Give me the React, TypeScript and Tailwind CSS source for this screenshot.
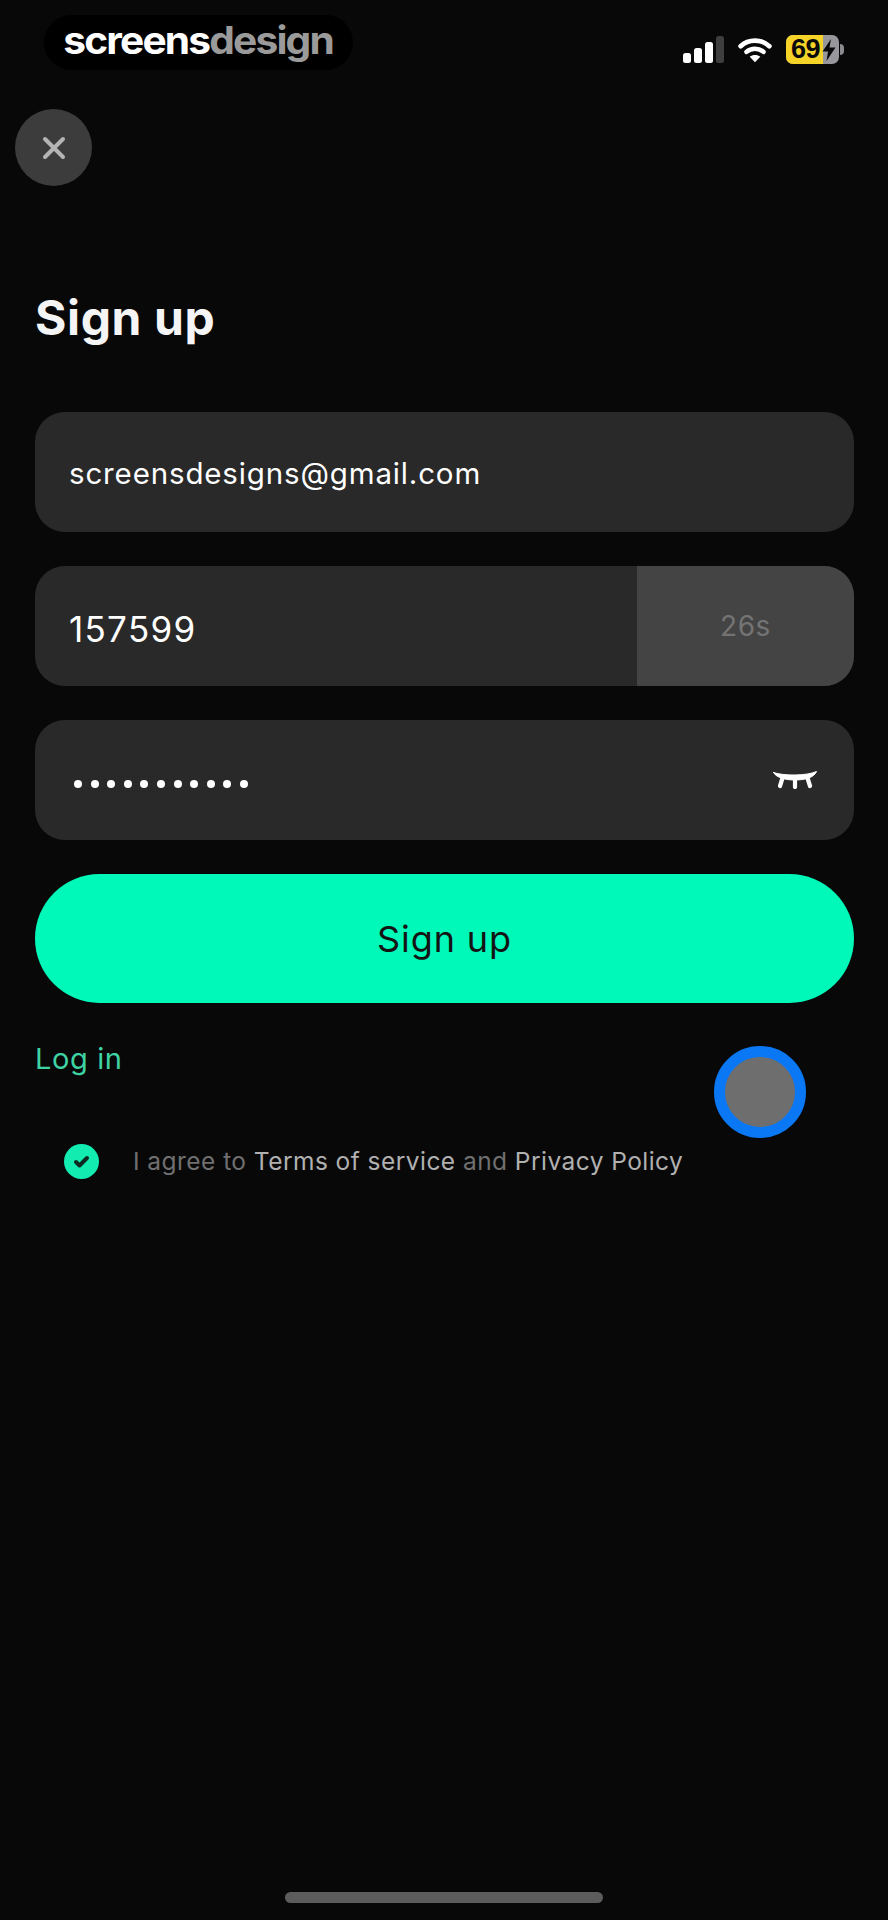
const SignalIcon = () => (
  <svg width="41" height="27" viewBox="0 0 41 27">
    <rect x="0" y="17" width="8" height="10" rx="2.5" fill="#fff" />
    <rect x="11" y="12" width="8" height="15" rx="2.5" fill="#fff" />
    <rect x="22" y="6" width="8" height="21" rx="2.5" fill="#fff" />
    <rect x="33" y="0" width="8" height="27" rx="2.5" fill="#3e3e3e" />
  </svg>
);

const WifiIcon = () => (
  <svg width="34" height="27" viewBox="0 0 36 28" fill="none">
    <path d="M2.8 10.5C11 2.5 25 2.5 33.2 10.5" stroke="#fff" strokeWidth="5" strokeLinecap="round" />
    <path d="M9 16.5C14 12 22 12 27 16.5" stroke="#fff" strokeWidth="4.8" strokeLinecap="round" />
    <path d="M18 27.5L12.4 21.8C15.5 19.2 20.5 19.2 23.6 21.8Z" fill="#fff" />
  </svg>
);

const Battery = () => (
  <div className="flex items-center">
    <div className="flex h-[29px] w-[53px] overflow-hidden rounded-[7px] bg-[#98989c]">
      <div className="flex h-full w-[37px] items-center justify-center bg-[#f5d327] pl-[2px]">
        <span className="text-[27px] leading-none font-bold text-[#0a0a0a] font-['Liberation_Sans',sans-serif] tracking-[-0.5px]">69</span>
      </div>
      <svg className="ml-[-1px] mt-[4px]" width="14" height="22" viewBox="0 0 14 22">
        <path d="M9 0L0.5 12.5H6L4.5 22L13.5 8.5H7.5Z" fill="#0a0a0a" />
      </svg>
    </div>
    <div className="ml-[1px] h-[11px] w-[4px] rounded-r-full bg-[#8a8a8e]" />
  </div>
);

const EyeClosed = () => (
  <svg width="44" height="18" viewBox="0 0 44 18" fill="#fff" stroke="#fff" strokeLinecap="round">
    <path d="M0.5 1.5C10 5 34 5 43.5 0.5C41 7 31 9 22 9C13 9 3.5 7 0.5 1.5Z" strokeWidth="1" strokeLinejoin="round" />
    <path d="M9.5 7L7 15" strokeWidth="4.2" />
    <path d="M22 9V16" strokeWidth="4.2" />
    <path d="M34.5 7L37 15" strokeWidth="4.2" />
  </svg>
);

const Field = ({ children }: { children: React.ReactNode }) => (
  <div className="flex h-[120px] items-center overflow-hidden rounded-[30px] bg-[#292929] pl-[34px] text-[29.5px] tracking-[0.85px] text-white">
    {children}
  </div>
);

export default function App() {
  return (
    <div className="relative flex h-[1920px] w-[888px] flex-col overflow-hidden bg-[#080809] font-['Inter',sans-serif]">
      {/* status bar */}
      <div className="flex items-start justify-between pl-[44px] pr-[44px] pt-[15px]">
        <div className="flex h-[55px] w-[309px] items-center justify-center rounded-full bg-black pb-[5px]">
          <div className="scale-x-[1.07] text-[38px] leading-none font-bold tracking-[-1.7px]">
            <span className="text-white">screens</span>
            <span className="text-[#9a9a9a]">design</span>
          </div>
        </div>
        <div className="mt-[20px] flex items-center gap-[14px]">
          <SignalIcon />
          <WifiIcon />
          <Battery />
        </div>
      </div>

      {/* close */}
      <button className="ml-[15px] mt-[39px] flex h-[77px] w-[77px] items-center justify-center rounded-full bg-[#3c3c3c]">
        <svg width="24" height="24" viewBox="0 0 24 24" fill="none" stroke="#b4b4b4" strokeWidth="4" strokeLinecap="round">
          <path d="M3 3L21 21M21 3L3 21" />
        </svg>
      </button>

      <div className="flex flex-1 flex-col pl-[35px] pr-[34px]">
        <h1 className="mt-[105px] text-[48px] leading-[54px] font-bold tracking-[0.6px] text-[#f5f5f5]">Sign up</h1>

        <div className="mt-[67px] flex flex-col gap-[34px]">
          <Field>
            <span className="pt-[3px]">screensdesigns@gmail.com</span>
          </Field>
          <Field>
            <span className="flex-1 pt-[6px] text-[35px] tracking-[1.3px]">157599</span>
            <div className="flex h-full w-[217px] items-center justify-center bg-[#444444] text-[28px] tracking-[0.6px] text-[#747474]">26s</div>
          </Field>
          <Field>
            <div className="flex flex-1 items-center gap-[8.6px] pl-[5px] pt-[8px]">
              {Array.from({ length: 11 }).map((_, i) => (
                <span key={i} className="h-[8px] w-[8px] rounded-full bg-white" />
              ))}
            </div>
            <div className="mr-[37px]">
              <EyeClosed />
            </div>
          </Field>
        </div>

        <button className="mt-[34px] h-[129px] rounded-full bg-[#00f8b8] text-[36px] tracking-[0.9px] text-[#141414]">Sign up</button>

        <div className="mt-[38px] text-[29px] leading-[36px] tracking-[0.6px] text-[#3fd3a4]">Log in</div>

        <div className="mt-[66px] ml-[29px] flex items-center text-[24.5px] tracking-[0.45px] text-[#6f6f6f]">
          <svg width="35" height="35" viewBox="0 0 35 35">
            <circle cx="17.5" cy="17.5" r="17.5" fill="#12ecb0" />
            <path d="M12 18L15.5 21.5L23 14" fill="none" stroke="#0c2a22" strokeWidth="4" strokeLinecap="round" strokeLinejoin="round" />
          </svg>
          <p className="ml-[34px]">
            I agree to <span className="text-[#b0b0b0]">Terms of service</span> and <span className="text-[#b0b0b0]">Privacy Policy</span>
          </p>
        </div>
      </div>

      {/* home indicator */}
      <div className="mx-auto mb-[17px] h-[11px] w-[318px] rounded-full bg-[#5c5c5c]" />

      {/* touch indicator, sits on top of the screen */}
      <div className="absolute left-[714px] top-[1046px] h-[92px] w-[92px] rounded-full border-[11px] border-[#0a78f5] bg-[#6e6e6e]" />
    </div>
  );
}
